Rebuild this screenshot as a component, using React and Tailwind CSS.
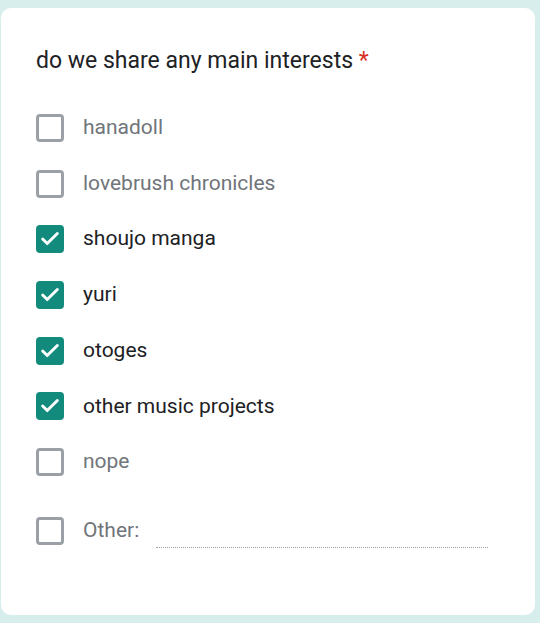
import { Check } from 'lucide-react'

const OPTIONS = [
  { label: 'hanadoll', checked: false },
  { label: 'lovebrush chronicles', checked: false },
  { label: 'shoujo manga', checked: true },
  { label: 'yuri', checked: true },
  { label: 'otoges', checked: true },
  { label: 'other music projects', checked: true },
  { label: 'nope', checked: false },
]

function Box({ checked }) {
  if (checked) {
    return (
      <div className="w-[28px] h-[28px] rounded-[4px] bg-[#128a7c] grid place-items-center shrink-0">
        <Check size={22} strokeWidth={3.2} color="#fff" />
      </div>
    )
  }
  return <div className="w-[28px] h-[28px] rounded-[4px] border-[3px] border-[#9aa0a6] shrink-0" />
}

export default function App() {
  return (
    <div
      className="w-[540px] h-[623px] bg-[#d8eeec] pt-[8px] pl-[1px] pr-[5px] pb-[8px]"
      style={{ fontFamily: 'Roboto, "Liberation Sans", sans-serif' }}
    >
      <div className="h-full bg-white rounded-[10px] pl-[35px] pt-[37px]">
        <div className="text-[23px] text-[#202124] leading-[32px]">
          do we share any main interests <span className="text-[#d93025]">*</span>
        </div>
        <div className="mt-[23px] flex flex-col">
          {OPTIONS.map((o) => (
            <div key={o.label} className="h-[55.7px] flex items-center gap-[19px]">
              <Box checked={o.checked} />
              <span className={`text-[21px] ${o.checked ? 'text-[#202124]' : 'text-[#70757a]'}`}>{o.label}</span>
            </div>
          ))}
          <div className="mt-[13px] h-[55.7px] flex items-center">
            <Box checked={false} />
            <span className="ml-[19px] text-[21px] text-[#70757a]">Other:</span>
            <div className="ml-[17px] mt-[33px] w-[332px] border-b border-dotted border-[#9aa0a6]" />
          </div>
        </div>
      </div>
    </div>
  )
}
